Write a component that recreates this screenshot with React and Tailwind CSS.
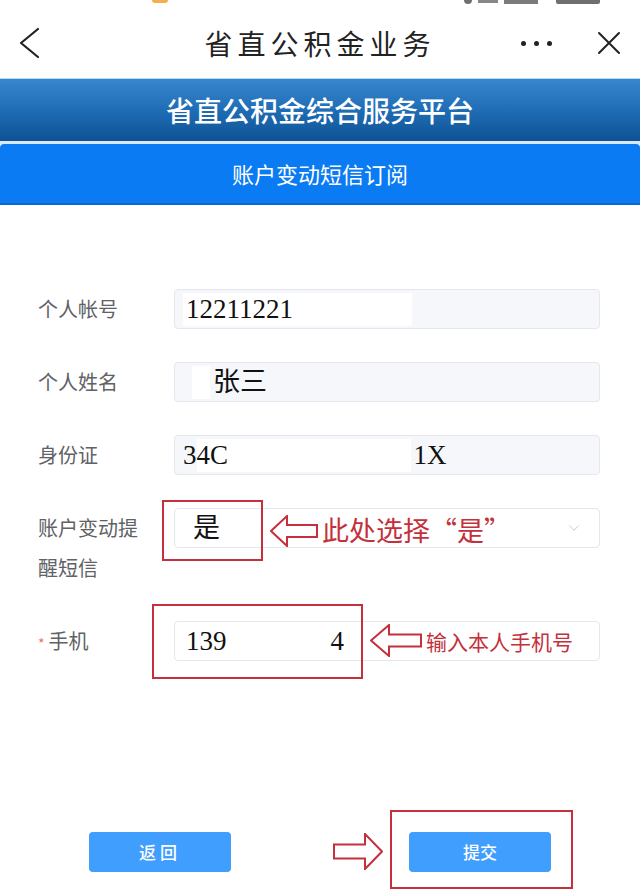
import { ChevronDown } from 'lucide-react';

const valueFont = "font-['Liberation_Serif','Noto_Sans_CJK_SC',serif] text-[27px] leading-none text-[#111]";

function Arrow({ dir = 'left', w, h, className }) {
  // hollow outline arrow used by the red annotations
  const mid = h / 2;
  const head = Math.round(w * 0.36);
  const sh = Math.round(h * 0.19);
  const pts =
    dir === 'left'
      ? `1,${mid} ${head},1 ${head},${mid - sh} ${w - 1},${mid - sh} ${w - 1},${mid + sh} ${head},${mid + sh} ${head},${h - 1}`
      : `${w - 1},${mid} ${w - head},1 ${w - head},${mid - sh} 1,${mid - sh} 1,${mid + sh} ${w - head},${mid + sh} ${w - head},${h - 1}`;
  return (
    <svg width={w} height={h} viewBox={`0 0 ${w} ${h}`} className={className}>
      <polygon points={pts} fill="white" stroke="#c4303b" strokeWidth="2" strokeLinejoin="miter" />
    </svg>
  );
}

function Row({ label, children, labelClass = '' }) {
  return (
    <div className="flex items-start">
      <div className={`w-[174px] shrink-0 pl-[38px] text-[20px] leading-[40px] text-[#606266] ${labelClass}`}>{label}</div>
      {children}
    </div>
  );
}

export default function App() {
  return (
    <div className="relative h-[890px] w-full overflow-hidden bg-white font-['Noto_Sans_CJK_SC',sans-serif]">
      {/* status bar remnants */}
      <div className="flex h-2 items-start">
        <div className="ml-[152px] h-[3px] w-4 rounded-b-full bg-[#f3b04a]" />
        <div className="ml-auto mr-10 flex items-start gap-[6px] opacity-70">
          <div className="h-[4px] w-[8px] rounded-b-full bg-[#333]" />
          <div className="h-[3px] w-[20px] bg-[#555]" />
          <div className="h-[4px] w-[34px] bg-[#444]" />
          <div className="ml-3 h-[4px] w-[44px] rounded-b-[2px] bg-[#333]" />
        </div>
      </div>

      {/* nav bar */}
      <div className="grid h-[70px] grid-cols-[1fr_auto_1fr] items-center">
        <div className="pl-[19px]">
          <svg width="22" height="32" viewBox="0 0 22 32">
            <polyline points="19,2 2,16 19,30" fill="none" stroke="#222" strokeWidth="2.2" strokeLinecap="round" strokeLinejoin="round" />
          </svg>
        </div>
        <div className="text-[28px] tracking-[5px] text-[#222]">省直公积金业务</div>
        <div className="flex items-center justify-end pr-[19px]">
          <div className="flex gap-[8px]">
            <span className="h-[5px] w-[5px] rounded-full bg-[#222]" />
            <span className="h-[5px] w-[5px] rounded-full bg-[#222]" />
            <span className="h-[5px] w-[5px] rounded-full bg-[#222]" />
          </div>
          <svg width="24" height="24" viewBox="0 0 24 24" className="ml-[45px]">
            <path d="M2 2 22 22M22 2 2 22" stroke="#222" strokeWidth="2" strokeLinecap="round" />
          </svg>
        </div>
      </div>
      <div className="h-px bg-[#b8dcf3]" />

      {/* platform header */}
      <div className="flex h-[62px] items-center justify-center bg-gradient-to-b from-[#3787cd] via-[#1f6db6] to-[#0e5294] text-[28px] font-medium text-white">
        省直公积金综合服务平台
      </div>
      <div className="h-[3px] bg-[#d5e9f8]" />
      <div className="flex h-[61px] items-center justify-center rounded-t-[4px] border-b-2 border-[#0a68d4] bg-[#0a7bf2] text-[22px] text-white">
        账户变动短信订阅
      </div>

      {/* form */}
      <div className="flex flex-col gap-[33px] pt-[84px]">
        <Row label="个人帐号">
          <div className="flex h-10 w-[426px] items-center rounded-[4px] border border-[#e4e7ed] bg-[#f5f7fa] pl-[8px]">
            <div className={`flex h-[33px] w-[229px] items-center bg-white pl-[3px] ${valueFont}`}>12211221</div>
          </div>
        </Row>
        <Row label="个人姓名">
          <div className="flex h-10 w-[426px] items-center rounded-[4px] border border-[#e4e7ed] bg-[#f5f7fa] pl-[8px]">
            <div className="ml-[9px] h-[33px] w-[18px] bg-white" />
            <span className={`ml-[3px] ${valueFont}`}>张三</span>
          </div>
        </Row>
        <Row label="身份证">
          <div className="flex h-10 w-[426px] items-center rounded-[4px] border border-[#e4e7ed] bg-[#f5f7fa] pl-[8px]">
            <span className={valueFont}>3</span>
            <div className={`flex h-[33px] w-[214px] items-center bg-white ${valueFont}`}>4C</div>
            <span className={`ml-[3px] ${valueFont}`}>1X</span>
          </div>
        </Row>
        <Row label="账户变动提醒短信" labelClass="pr-[26px]">
          <div className="flex h-10 w-[426px] items-center rounded-[4px] border border-[#e4e7ed] bg-white pl-[18px] pr-[16px]">
            <span className={valueFont}>是</span>
            <ChevronDown size={18} strokeWidth={1.2} className="ml-auto text-[#c0c4cc]" />
          </div>
        </Row>
        <Row
          label={
            <span>
              <span className="mr-[4px] text-[14px] text-[#f56c6c]">*</span>手机
            </span>
          }
        >
          <div className="flex h-10 w-[426px] items-center rounded-[4px] border border-[#e4e7ed] bg-white pl-[11px]">
            <span className={valueFont}>139</span>
            <span className={`ml-[104px] ${valueFont}`}>4</span>
          </div>
        </Row>
      </div>

      {/* buttons */}
      <div className="mt-[169px] grid grid-cols-2">
        <div className="flex justify-center">
          <button className="h-10 w-[142px] rounded-[4px] bg-[#409eff] text-[17px] font-medium tracking-[4px] text-white">返回</button>
        </div>
        <div className="flex justify-center">
          <button className="h-10 w-[142px] rounded-[4px] bg-[#409eff] text-[17px] font-medium text-white">提交</button>
        </div>
      </div>

      {/* red annotations overlaid on the form */}
      <div className="absolute left-[162px] top-[500px] h-[61px] w-[101px] border-2 border-[#c4303b]" />
      <Arrow dir="left" w={48} h={32} className="absolute left-[270px] top-[515px]" />
      <div className="absolute left-[322px] top-[514px] text-[27px] leading-[32px] text-[#c4303b]">此处选择“是”</div>

      <div className="absolute left-[152px] top-[604px] h-[75px] w-[211px] border-2 border-[#c4303b]" />
      <Arrow dir="left" w={52} h={33} className="absolute left-[370px] top-[624px]" />
      <div className="absolute left-[426px] top-[628px] text-[21px] leading-[26px] text-[#c4303b]">输入本人手机号</div>

      <Arrow dir="right" w={50} h={37} className="absolute left-[333px] top-[833px]" />
      <div className="absolute left-[390px] top-[810px] h-[79px] w-[183px] border-2 border-[#c4303b]" />
    </div>
  );
}
